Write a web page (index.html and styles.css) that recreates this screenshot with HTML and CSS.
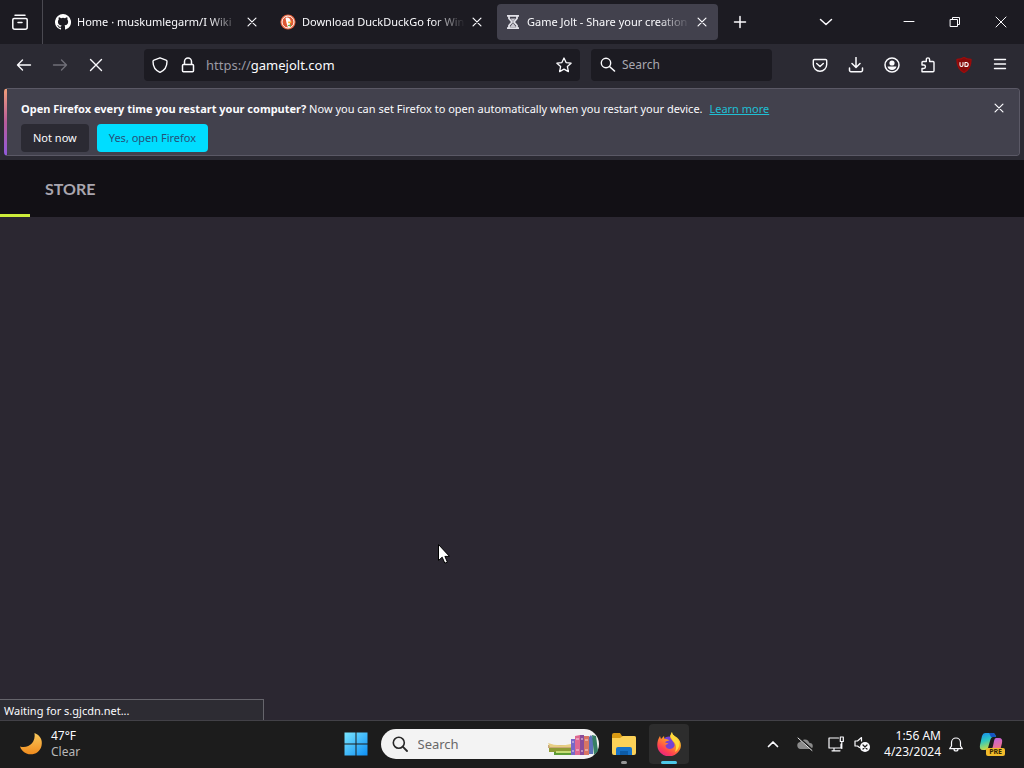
FILE: index.html
```
<!DOCTYPE html>
<html lang="en">
<head>
<meta charset="utf-8">
<title>Game Jolt - Share your creations</title>
<link rel="stylesheet" href="styles.css">
</head>
<body>
<svg class="sprite" aria-hidden="true">
  <symbol id="close" viewBox="0 0 16 16"><path d="M3.500 3.500l9 9m0-9l-9 9"/></symbol>
</svg>
<div class="desktop">
  <header class="tabbar">
    <button class="view" aria-label="Firefox View"><svg class="icon" viewBox="0 0 18 18"><path d="M4 2.200h10M3 5.600h12a1.200 1.200 0 0 1 1.200 1.200v7.400a2 2 0 0 1-2 2H3.800a2 2 0 0 1-2-2V6.800A1.200 1.200 0 0 1 3 5.600zM7 9.500h4" stroke-width="1.500"/></svg></button>
    <div class="tabs">
      <div class="tab">
        <svg class="favicon" viewBox="0 0 16 16"><path fill="#fff" d="M8 0a8 8 0 0 0-2.530 15.590c.4.070.550-.170.550-.380v-1.490c-2.230.480-2.690-.950-2.690-.950-.360-.920-.890-1.170-.890-1.170-.730-.500.060-.490.060-.490.800.060 1.230.830 1.230.830.710 1.220 1.870.870 2.330.660.070-.520.280-.870.510-1.070-1.780-.200-3.640-.890-3.640-3.950 0-.870.310-1.590.820-2.150-.080-.200-.360-1.020.080-2.120 0 0 .670-.210 2.200.820a7.600 7.600 0 0 1 4 0c1.530-1.040 2.200-.820 2.200-.820.440 1.100.160 1.920.080 2.120.510.560.820 1.270.820 2.150 0 3.070-1.870 3.750-3.650 3.950.290.250.540.730.540 1.480v2.200c0 .210.150.460.550.380A8 8 0 0 0 8 0z"/></svg>
        <button class="title">Home · muskumlegarm/I Wiki</button>
        <button class="close" aria-label="Close tab"><svg class="icon" viewBox="0 0 16 16"><use href="#close"/></svg></button>
      </div>
      <div class="tab">
        <svg class="favicon" viewBox="0 0 16 16"><circle cx="8" cy="8" r="7.600" fill="#e4623c"/><circle cx="8" cy="8" r="6" fill="#de5833" stroke="#fff"/><path fill="#fff" d="M5.500 4c2-1 4.500-.2 5 2.500l.3 2-1 1 .5 3.500-2.300.7L6.500 9z"/><path fill="#f9b928" d="M8.200 7.500l4 .3-1.500 1.200-2.500.3z"/><path fill="#5db34b" d="M8 11l3-.5v2l-3-.4z"/></svg>
        <button class="title">Download DuckDuckGo for Win</button>
        <button class="close" aria-label="Close tab"><svg class="icon" viewBox="0 0 16 16"><use href="#close"/></svg></button>
      </div>
      <div class="tab active">
        <svg class="favicon" viewBox="0 0 16 16"><path fill="none" stroke="#e2e1e8" stroke-width="1.800" d="M2 1.800h12M2 14.200h12M4 2v2.500L7 8l-3 3.500V14M12 2v2.500L9 8l3 3.500V14"/><path fill="#c9c7d0" d="M5.500 4.500h5L8 7.500zM8 9l3 4H5z"/></svg>
        <button class="title">Game Jolt - Share your creation</button>
        <button class="close" aria-label="Close tab"><svg class="icon" viewBox="0 0 16 16"><use href="#close"/></svg></button>
      </div>
    </div>
    <button class="tool newtab" aria-label="New tab"><svg class="icon" viewBox="0 0 16 16"><path d="M8 2.500v11M2.500 8h11" stroke-width="1.500"/></svg></button>
    <div class="window">
      <button class="tool listtabs" aria-label="List all tabs"><svg class="icon" viewBox="0 0 16 16"><path d="M2.500 5.500L8 10.500l5.500-5" stroke-width="1.500"/></svg></button>
      <button class="caption" aria-label="Minimize"><svg class="icon" viewBox="0 0 16 16"><path d="M3 7.500h10" stroke-width="1"/></svg></button>
      <button class="caption" aria-label="Restore"><svg class="icon" viewBox="0 0 16 16"><path d="M3.500 5.500h7v7h-7zM5.500 5.500v-2h7v7h-2" stroke-width="1"/></svg></button>
      <button class="caption" aria-label="Close window"><svg class="icon" viewBox="0 0 16 16"><path d="M3 3l10 10M13 3L3 13" stroke-width="1"/></svg></button>
    </div>
  </header>

  <nav class="toolbar">
    <div class="group">
      <button class="tool" aria-label="Back"><svg class="icon" viewBox="0 0 16 16"><path d="M14.500 8H1.500M6.500 3L1.500 8l5 5" stroke-width="1.400"/></svg></button>
      <button class="tool dim" aria-label="Forward"><svg class="icon" viewBox="0 0 16 16"><path d="M1.500 8h13M9.500 3l5 5-5 5" stroke-width="1.400"/></svg></button>
      <button class="tool" aria-label="Stop"><svg class="icon" viewBox="0 0 16 16"><path d="M2.500 2.500l11 11m0-11l-11 11" stroke-width="1.400"/></svg></button>
    </div>
    <div class="field url">
      <svg class="icon" viewBox="0 0 16 16"><path d="M8 .8l6 2.300c.8.300 1 .8 1 1.500 0 5-2.500 9-7 10.800C3.500 13.600 1 9.600 1 4.600c0-.7.200-1.200 1-1.500z"/></svg>
      <svg class="icon lock" viewBox="0 0 16 16"><path d="M3.500 7.500h9a1 1 0 0 1 1 1v5.300a1 1 0 0 1-1 1h-9a1 1 0 0 1-1-1V8.500a1 1 0 0 1 1-1zM4.500 7V4.500a3.500 3.500 0 0 1 7 0V7" stroke-width="1.500"/></svg>
      <label for="address">https://</label><input id="address" type="text" value="gamejolt.com">
      <svg class="icon" viewBox="0 0 16 16"><path d="M8 1l2.100 4.600 5 .6-3.700 3.400 1 5L8 12.100l-4.400 2.500 1-5L.9 6.200l5-.6z" stroke-width="1.300"/></svg>
    </div>
    <div class="field search">
      <svg class="icon" viewBox="0 0 16 16"><circle cx="6" cy="6" r="4.700"/><path d="M9.500 9.500l5 4.500" stroke-width="1.600"/></svg>
      <input type="text" placeholder="Search" aria-label="Search">
    </div>
    <div class="group">
      <button class="tool" aria-label="Pocket"><svg class="icon" viewBox="0 0 16 16"><path d="M2.500 2.500h11a1.200 1.200 0 0 1 1.200 1.200V7.500a6.700 6.700 0 0 1-13.400 0V3.700a1.200 1.200 0 0 1 1.200-1.200zM4.700 6.500L8 9.500l3.300-3"/></svg></button>
      <button class="tool" aria-label="Downloads"><svg class="icon" viewBox="0 0 16 16"><path d="M8 .5v9.500M4 6.500L8 10.500l4-4M1.500 11v2.200a1.500 1.500 0 0 0 1.500 1.500h10a1.500 1.500 0 0 0 1.500-1.500V11" stroke-width="1.500"/></svg></button>
      <button class="tool" aria-label="Account"><svg class="icon" viewBox="0 0 16 16"><circle cx="8" cy="8" r="7" stroke-width="1.500"/><circle class="solid" cx="8" cy="6" r="2.600"/><path class="solid" d="M3.500 9.500h9c-.5 2.300-2.200 3.500-4.500 3.500s-4-1.200-4.500-3.500z"/></svg></button>
      <button class="tool" aria-label="Extensions"><svg class="icon" viewBox="0 0 16 16"><path d="M2 14.800V11.500h1.700a1.700 1.700 0 0 0 0-3.500H2V5.500a1 1 0 0 1 1-1h3.300V2.500a1.600 1.600 0 0 1 3.300 0v2h3.400a1 1 0 0 1 1 1v8.300a1 1 0 0 1-1 1z"/></svg></button>
      <button class="tool" aria-label="uBlock Origin"><svg class="icon" viewBox="0 0 16 16"><path d="M8 .5c2 1.300 4 1.800 7 2 0 6-1.500 10-7 13C2.500 12.500 1 8.500 1 2.500c3-.2 5-.7 7-2z" fill="#850b0b" stroke="#9c0c0c"/><path d="M4 5.500v2.500q0 1.500 1.500 1.500T7 8V5.500M9 5.500v4h1q2.200 0 2.200-2T10 5.500z" stroke="#fff" stroke-width="1.100"/></svg></button>
      <button class="tool" aria-label="Menu"><svg class="icon" viewBox="0 0 16 16"><path d="M2.500 2.500h11M2.500 7h11M2.500 11.500h11" stroke-width="1.400"/></svg></button>
    </div>
  </nav>

  <div class="notice">
    <div class="message">
      <p><strong>Open Firefox every time you restart your computer?</strong> Now you can set Firefox to open automatically when you restart your device. <a href="#">Learn more</a></p>
      <div class="actions"><button class="no">Not now</button><button class="yes">Yes, open Firefox</button></div>
    </div>
    <button class="dismiss" aria-label="Dismiss"><svg class="icon" viewBox="0 0 16 16"><use href="#close"/></svg></button>
  </div>

  <main class="page">
    <div class="sitebar"><a href="#">STORE</a><span class="progress"></span></div>
    <svg class="cursor" viewBox="0 0 12 20"><path d="M.5.5v16l3.700-3.300 2.600 6 2.600-1.100-2.500-5.700h4.600z" fill="#fff" stroke="#000"/></svg>
    <div class="status">Waiting for s.gjcdn.net...</div>
  </main>

  <footer class="taskbar">
    <button class="weather">
      <svg class="moon" viewBox="0 0 24 24"><defs><linearGradient id="m" x2="0" y2="1"><stop stop-color="#f9c95c"/><stop offset="1" stop-color="#f08b1d"/></linearGradient></defs><path fill="url(#m)" d="M15.500 1C21 3 24 8 22.500 14c-1.800 7-9 10-15 7.500C4 20 2 17.500 1 14.500c8 2.500 16-3.500 14.500-13.500z"/></svg>
      <span class="reading"><span>47°F</span><span class="sky">Clear</span></span>
    </button>
    <div class="apps">
      <button class="app" aria-label="Start"><svg class="appicon" viewBox="0 0 24 24"><defs><linearGradient id="w" gradientUnits="userSpaceOnUse" x1="0" y1="0" x2="24" y2="24"><stop stop-color="#7ce8ff"/><stop offset="1" stop-color="#0a8cf5"/></linearGradient></defs><path fill="url(#w)" d="M.5.5h11v11H.5zM12.500.5h11v11h-11zM.5 12.500h11v11H.5zM12.500 12.500h11v11h-11z"/></svg></button>
      <div class="tasksearch">
        <svg class="icon" viewBox="0 0 16 16"><circle cx="6.800" cy="6.800" r="5.500" stroke-width="1.600"/><path d="M10.700 10.700l4.300 4.300" stroke-width="1.800"/></svg>
        <input type="text" placeholder="Search" aria-label="Search Windows">
        <svg class="books" viewBox="0 0 52 26"><path fill="#c9a878" d="M1 14h24v3H1z"/><path fill="#8e9c35" d="M2 17h24v4H2z"/><path fill="#e7cf83" d="M1 12q10 4 23 1v3H3z"/><path fill="#5d9c35" d="M7 21h20v3H7z"/><path fill="#c6dc74" d="M9 20h16v2H9z"/><path fill="#7768c8" d="M24 8h4v16h-4z"/><path fill="#dd6891" d="M28 5l5-1v20h-5z"/><path fill="#8a4c9a" d="M33 4h4v20h-4z"/><path fill="#d87563" d="M37 5h5v19h-5z"/><path fill="#5d71ba" d="M42 6l2-2 2 3v16h-4z"/><path fill="#377f64" d="M45 4l4 1 2 15-4 4z"/><path stroke="#f4d6e2" d="M29 8h3m-3 11h3m6-10h3m-3 10h3M25 11h2m-2 9h2m7-12h2m-2 12h2"/></svg>
      </div>
      <button class="app" aria-label="File Explorer"><svg class="appicon" viewBox="0 0 24 24"><path fill="#d99a13" d="M0 3q0-2 2-2h6l2 3h12q2 0 2 2v5H0z"/><path fill="#fbd158" d="M0 6h8l3-2h11q2 0 2 2v15q0 2-2 2H2q-2 0-2-2z"/><path fill="#1672c8" d="M4 23v-6q0-2 2-2h12q2 0 2 2v6z"/><path fill="#0c5ba7" d="M8 19h8v4H8z"/></svg><span class="mark"></span></button>
      <button class="app on" aria-label="Firefox"><svg class="appicon" viewBox="0 0 24 24"><defs><linearGradient id="f" x1=".8" x2=".2" y2="1"><stop stop-color="#fff14a"/><stop offset=".4" stop-color="#ff9a25"/><stop offset=".75" stop-color="#ff4052"/><stop offset="1" stop-color="#e2208b"/></linearGradient></defs><circle cx="12" cy="12" r="7.500" fill="#7542d4"/><path fill="url(#f)" d="M15 0c0 3 3 4 5 5.500 4.500 4 5 9.500 2 13.500a12 12 0 0 1-20 0C-1 14.500.3 8 3 4l1 3 3-3 .5 3c1.500 0 3.500 0 5 1.500-2.500 0-4 1-4.500 2 1 .5 3 .5 3.500 1-1 1-3 1-3 2.500 1 4 7.500 4 9 0C18.500 10 13 8 13 4z"/><path fill="#ffd83b" d="M15 0c0 4 5 4 7 10 1 4-1 8-4 10 2-5 1-8-1-10-2-3-5-5-2-10z"/></svg><span class="mark"></span></button>
    </div>
    <div class="tray">
      <button class="trayitem" aria-label="Show hidden icons"><svg class="icon" viewBox="0 0 16 16"><path d="M3.500 10.500L8 6l4.500 4.500" stroke-width="1.700"/></svg></button>
      <button class="trayitem" aria-label="OneDrive"><svg class="icon" viewBox="0 0 16 16"><path fill="#8b8b8b" stroke="none" d="M3.500 13a3.500 3.500 0 0 1-.5-6.900 5.200 5.200 0 0 1 9.500.9 3 3 0 0 1 .5 6z"/><path stroke="#1d1d1d" stroke-width="2" d="M2 2l13.500 12"/><path stroke="#eee" stroke-width="1" d="M1 2l14 12.500"/></svg></button>
      <div class="system">
        <button class="trayitem" aria-label="Network"><svg class="icon" viewBox="0 0 16 16"><path stroke-width="1.200" d="M10.500 2H1v10h12V8M4 14.800h8M6 12v2.500M12.300 1h3v4.500h-3zM13.800 5.500v7"/></svg></button>
        <button class="trayitem" aria-label="Volume muted"><svg class="icon" viewBox="0 0 16 16"><path stroke-width="1.200" d="M7.500 5V1.500l-4 3.500H1v5h2.500l2 1.500"/><circle class="solid" cx="11" cy="11" r="5"/><path stroke="#1c1c1c" stroke-width="1.200" d="M9 9l4 4m0-4l-4 4"/></svg></button>
      </div>
      <button class="clock"><span>1:56 AM</span><span>4/23/2024</span></button>
      <button class="trayitem bell" aria-label="Notifications"><svg class="icon" viewBox="0 0 16 16"><path stroke-width="1.200" d="M3.500 10V6.500a4.500 4.500 0 0 1 9 0V10l1.800 2.700H1.700zM6 13a2 2 0 0 0 4 0"/></svg></button>
      <button class="copilot" aria-label="Copilot preview"><svg viewBox="0 0 24 24"><defs><linearGradient id="c1" x2=".3" y2="1"><stop stop-color="#168bf0"/><stop offset=".5" stop-color="#2ec8c0"/><stop offset="1" stop-color="#c7dc46"/></linearGradient><linearGradient id="c2" x2=".3" y2="1"><stop stop-color="#b95ff3"/><stop offset="1" stop-color="#ff786b"/></linearGradient></defs><path fill="url(#c1)" d="M6 1h8q2 0 3 4h-3q-2 0-3 4l-2 7q-.5 2-3 2H4q-4 0-3-5L3 4q1-3 3-3z"/><path fill="#1656c4" d="M10 1h4q2 0 3 4h-5z"/><path fill="url(#c2)" d="M17 6h3q4 0 3 5l-2 8q-1 3-4 3h-7q-2-1-2-4h3q2 0 3-4l1-5q.5-3 2-3z"/></svg><span class="pre">PRE</span></button>
    </div>
  </footer>
</div>
</body>
</html>
```
FILE: styles.css
```
* { box-sizing: border-box; }
body { margin: 0; background: #2b2a33; color: #fbfbfe; font: 11px/16px "Noto Sans", "Open Sans", sans-serif; }
button { margin: 0; padding: 0; border: 0; background: none; color: inherit; font: inherit; }
input { min-width: 0; padding: 0; border: 0; outline: 0; background: none; color: inherit; font: inherit; }
.sprite { display: none; }
.icon { width: 16px; height: 16px; flex: none; fill: none; stroke: currentColor; stroke-width: 1.4; stroke-linecap: round; stroke-linejoin: round; }
.solid { fill: currentColor; stroke: none; }
.desktop { display: flex; flex-direction: column; min-height: 100vh; }

.tabbar { display: flex; align-items: center; height: 44px; background: #1c1b22; }
.view { display: grid; place-items: center; width: 43px; height: 44px; padding-right: 3px; border-right: 1px solid #4a4951; }
.view .icon { width: 18px; height: 18px; }
.tabs { display: flex; gap: 4px; margin-left: 4px; }
.tab { display: flex; align-items: center; width: 221px; height: 36px; padding: 0 8px; border-radius: 4px; }
.active { background: #42414d; }
.favicon { width: 16px; height: 16px; flex: none; margin-right: 6px; }
.title { flex: 1; white-space: nowrap; text-align: left; mask-image: linear-gradient(to left, transparent, #000 32px); }
.close { display: grid; place-items: center; width: 24px; height: 24px; margin-right: -4px; }
.close .icon, .dismiss .icon { width: 14px; height: 14px; }
.tool { display: grid; place-items: center; width: 36px; height: 36px; }
.newtab { margin-left: 4px; }
.window { display: flex; align-items: center; margin-left: auto; }
.listtabs { margin-right: 42px; }
.caption { display: grid; place-items: center; width: 46px; height: 44px; }

.toolbar { display: flex; align-items: center; height: 42px; padding: 0 6px; }
.group { display: flex; }
.dim { color: #706f78; }
.field { display: flex; align-items: center; height: 32px; border-radius: 4px; background: #1c1b22; font-size: 13px; }
.url { flex: 1; margin: 0 11px 0 30px; padding: 0 8px; }
.url label { margin-left: 10px; color: #9a99a2; }
.url input { flex: 1; }
.lock { margin-left: 12px; }
.search { width: 181px; margin-right: 30px; padding: 0 9px; gap: 6px; }
.search input { width: 100%; font-size: 12px; }
input::placeholder { color: #a9a8b0; opacity: 1; }

.notice { display: flex; align-items: flex-start; justify-content: space-between; margin: 2px 4px 4px; padding: 12px 12px 3px 14px; border: 1px solid #5b5966; border-left: 3px solid transparent; border-radius: 4px; background: linear-gradient(#42414d, #42414d) padding-box, linear-gradient(#f2a078, #b85c9a 50%, #9059dd) left / 3px 100% no-repeat border-box; }
.message p { margin: 0; }
.message a { margin-left: 4px; color: #20bfd4; }
.actions { display: flex; gap: 8px; margin-top: 7px; }
.actions button { height: 28px; padding: 0 12px; border-radius: 4px; }
.no { background: #2b2a33; }
.yes { background: #00ddff; color: #24527a; }
.dismiss { display: grid; place-items: center; width: 16px; height: 14px; }

.page { position: relative; flex: 1; background: #2b2731; }
.sitebar { position: relative; display: flex; align-items: center; height: 57px; padding-left: 45px; background: #121015; }
.sitebar a { color: #a9a5ae; font: bold 16px/20px Lato, sans-serif; text-decoration: none; }
.progress { position: absolute; left: 0; bottom: 0; width: 30px; height: 3px; background: #ccec3a; }
.cursor { position: absolute; left: 438px; top: 384px; width: 12px; height: 20px; }
.status { position: absolute; left: 0; bottom: 0; width: 264px; padding: 3px 4px 1px; border: solid #66656c; border-width: 1px 1px 0 0; background: #2d2c33; }

.taskbar { display: grid; grid-template-columns: 1fr auto 1fr; align-items: center; height: 48px; padding-bottom: 2px; border-top: 1px solid #424147; background: #1c1c1c; font-size: 12px; }
.weather { display: flex; align-items: center; gap: 8px; padding-left: 19px; text-align: left; }
.moon { width: 24px; height: 24px; }
.reading, .clock { display: flex; flex-direction: column; }
.sky { color: #b8b8b8; }
.apps { display: flex; align-items: center; gap: 5px; }
.app { position: relative; display: grid; place-items: center; width: 40px; height: 40px; border-radius: 4px; }
.on { background: #2d2d2d; }
.appicon { width: 24px; height: 24px; }
.mark { position: absolute; left: 50%; bottom: 0; width: 6px; height: 3px; border-radius: 2px; background: #969696; transform: translateX(-50%); }
.on .mark { width: 16px; background: #4cc8e8; }
.tasksearch { display: flex; align-items: center; width: 218px; height: 30px; padding: 0 0 0 11px; border-radius: 15px; background: #f3f3f3; color: #282828; font-size: 13px; }
.tasksearch input { flex: 1; margin-left: 10px; }
.tasksearch input::placeholder { color: #686868; }
.books { width: 52px; height: 26px; flex: none; }
.tray { display: flex; align-items: center; justify-content: flex-end; padding-right: 17px; }
.trayitem { display: grid; place-items: center; width: 32px; height: 40px; }
.system { display: flex; margin: 0 9px 0 2px; }
.system .trayitem { width: 26px; }
.clock { align-items: flex-end; white-space: nowrap; }
.bell { width: 30px; }
.copilot { position: relative; width: 28px; height: 28px; margin-left: 8px; text-align: left; }
.copilot svg { display: block; width: 24px; height: 24px; }
.pre { position: absolute; right: 2px; bottom: 2px; padding: 0 3px; border-radius: 2px; background: #f2bb2b; color: #332504; font: bold 7px/8px "Noto Sans", sans-serif; }
```
